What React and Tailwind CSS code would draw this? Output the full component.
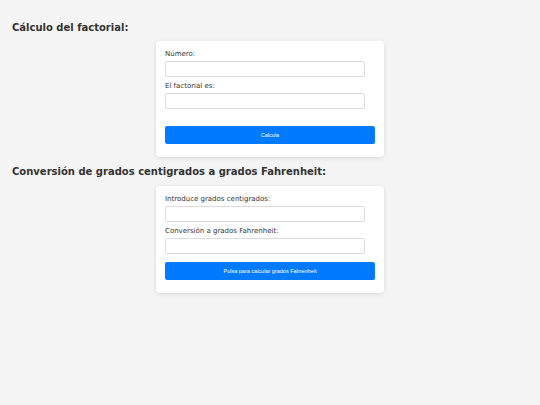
export default function App() {
  const label = "block text-[7px] leading-[10px] text-[#333] mb-[2px]";
  const input = "block w-[200px] h-[16px] rounded-[2px] border border-[#dcdcdc] bg-white";
  return (
    <div className="min-h-screen bg-[#f4f4f4] px-3 pt-[22px] font-['DejaVu_Sans',sans-serif] text-[#333]">
      <h2 className="text-[10px] font-bold leading-[12px]">Cálculo del factorial:</h2>
      <div className="mx-auto mt-[7px] w-[228px] rounded-[4px] bg-white px-[9px] pt-[8px] pb-[13px] shadow-[0_1px_4px_rgba(0,0,0,0.12)]">
        <label className={label}>Número:</label>
        <div className={input} />
        <label className={label + " mt-[4px]"}>El factorial es:</label>
        <div className={input} />
        <button className="mt-[17px] block h-[18px] w-full rounded-[2px] bg-[#007bff] font-['Liberation_Sans',sans-serif] text-[5.5px] text-white">
          Calcula
        </button>
      </div>
      <h2 className="mt-[9px] text-[10px] font-bold leading-[12px]">
        Conversión de grados centigrados a grados Fahrenheit:
      </h2>
      <div className="mx-auto mt-[8px] w-[228px] rounded-[4px] bg-white px-[9px] pt-[8px] pb-[13px] shadow-[0_1px_4px_rgba(0,0,0,0.12)]">
        <label className={label}>Introduce grados centigrados:</label>
        <div className={input} />
        <label className={label + " mt-[4px]"}>Conversión a grados Fahrenheit:</label>
        <div className={input} />
        <button className="mt-[8px] block h-[18px] w-full rounded-[2px] bg-[#007bff] font-['Liberation_Sans',sans-serif] text-[5.5px] text-white">
          Pulsa para calcular grados Fahrenheit
        </button>
      </div>
    </div>
  );
}
